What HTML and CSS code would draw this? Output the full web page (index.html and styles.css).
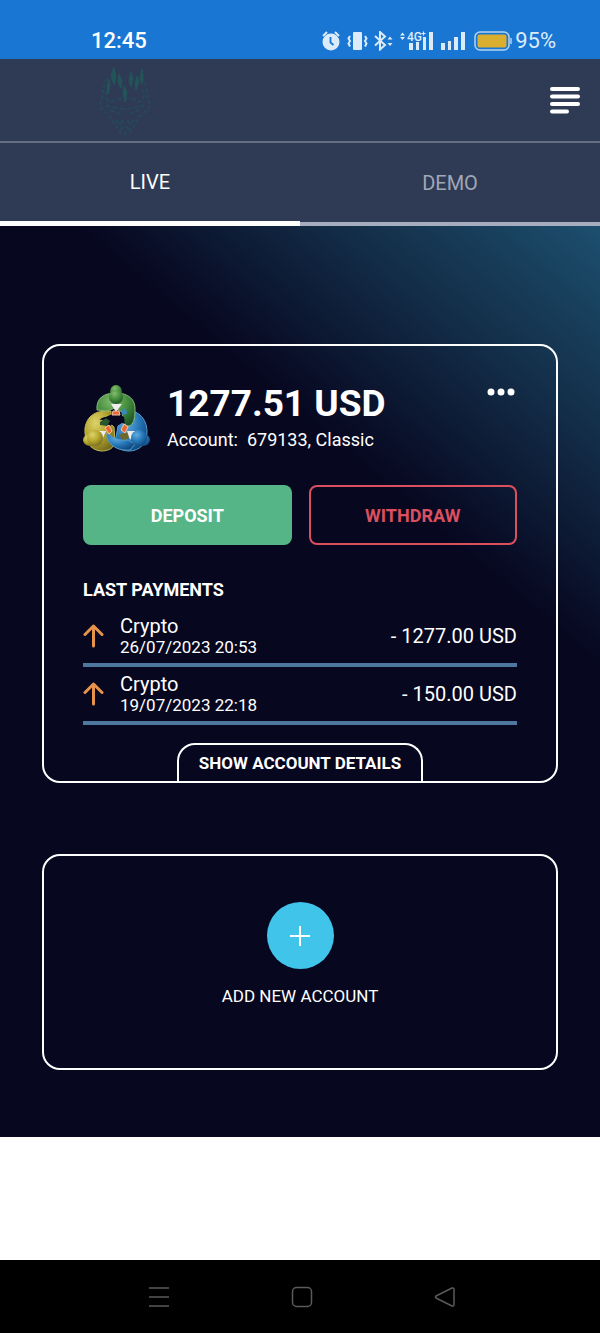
FILE: index.html
```html
<!doctype html>
<html lang="en">
<head>
    <meta charset="utf-8">
    <meta name="viewport" content="width=device-width, initial-scale=1">
    <title>Accounts</title>
    <link rel="stylesheet" href="styles.css">
</head>
<body>
    <div class="status-bar">
        <span class="clock">12:45</span>
        <div class="status-icons">
            <svg width="162" height="20" viewBox="0 0 162 20" fill="#dcebfa">
                <!-- alarm -->
                <circle cx="9" cy="11" r="8.5"/>
                <path d="M1 5l4-4M13 1l4 4" stroke="#dcebfa" stroke-width="2"/>
                <path d="M8.500 6v5.500l3 2.500" fill="none" stroke="#1976d2" stroke-width="1.800"/>
                <!-- vibrate -->
                <rect x="31" y="1" width="9" height="18" rx="1"/>
                <path d="M28 5l-1.500 2.500 1.500 2.500-1.500 2.500 1.500 3M43 5l1.500 2.500-1.500 2.500 1.500 2.500-1.500 3" fill="none" stroke="#dcebfa" stroke-width="2"/>
                <!-- bluetooth -->
                <path d="M53 5l10 9-5 4.500V1l5 4.500-10 9" fill="none" stroke="#dcebfa" stroke-width="2"/>
                <path d="M65.500 8.500l2.500-3 2.500 3zM65.500 12l2.500 3 2.500-3z"/>
                <!-- mobile signal -->
                <path d="M78 4.500l2.500-3 2.500 3zM78 6l2.500 3 2.500-3z"/>
                <text x="85" y="10" font-family="Roboto, sans-serif" font-size="12" font-weight="500">4G</text>
                <path d="M99.500 2.500h4M101.500 .5v4" stroke="#dcebfa" stroke-width="1.200"/>
                <path d="M87 12h4v7h-4zM94 11h3v8h-3zM101 6h3v13h-3zM107 1h4v18h-4z"/>
                <path d="M119 12h4v7h-4zM126 10h3v9h-3zM132 6h4v13h-4zM139 1h4v18h-4z"/>
            </svg>
            <svg width="38" height="20" viewBox="0 0 38 20" fill="none">
                <rect x="1" y="1" width="34" height="18" rx="5" stroke="#b5d3f0" stroke-width="1.500"/>
                <rect x="3.500" y="3.500" width="29" height="13" rx="2" fill="#dcae2f"/>
                <path d="M37 7v6" stroke="#b5d3f0" stroke-width="1.500"/>
            </svg>
            <span class="battery">95%</span>
        </div>
    </div>

    <header class="header">
        <a class="logo" href="#" aria-label="Home">
            <svg width="54" height="72" viewBox="0 0 54 72" fill="none" stroke="#26495a" stroke-width="2">
                <path d="M9 14C4 24 5 31 4 36l-2 4c1 6 5 8 9 11l6 9 5 8 5 2 5-2 5-8 6-9c4-3 8-5 9-11l-2-4c-1-5 0-12-5-22" stroke-dasharray="4 2"/>
                <path d="M9 26c-2 6-1 9 3 12 9-5 21-5 30 0 4-3 5-6 3-12M8 41c10 5 28 5 38 0M12 46l10 4M42 46l-10 4M18 56l5 6M36 56l-5 6M22 66l5-4 5 4M25 56l-3 5M29 56l3 5" stroke-dasharray="5 2"/>
                <g stroke="#23545a" fill="#23545a" stroke-width="1">
                    <path d="M16 3l-3 9 3 9 2-8zM21 10l-1 8 3 6 1-7zM26 22l-1 6 2 10 2-10zM33 8l-2 8 2 7 2-8zM39 12l-2 8 1 6 3-8zM44 5l-2 9 2 6 1-8zM11 15l-2 8 1 7 2-8z"/>
                </g>
            </svg>
        </a>
        <button class="menu-btn" type="button" aria-label="Menu">
            <svg width="30" height="28" viewBox="0 0 30 28" stroke="#fff" stroke-width="4" stroke-linecap="round">
                <path d="M2 3h26M2 10.500h26M2 18h26M2 25.500h15"/>
            </svg>
        </button>
    </header>

    <nav class="tabs">
        <a class="tab active" href="#live">LIVE</a>
        <a class="tab" href="#demo">DEMO</a>
    </nav>

    <main class="content">
        <section class="card account">
            <div class="account-head">
                <!-- three people round a table -->
                <svg class="account-logo" width="67" height="68" viewBox="0 0 67 68">
                    <defs>
                        <radialGradient id="green" cx=".4" cy=".25" r=".8">
                            <stop offset="0" stop-color="#86bb70"/>
                            <stop offset=".5" stop-color="#458f3d"/>
                            <stop offset="1" stop-color="#1c5427"/>
                        </radialGradient>
                        <radialGradient id="yellow" cx=".35" cy=".3" r=".8">
                            <stop offset="0" stop-color="#ddd36c"/>
                            <stop offset=".5" stop-color="#b6a62d"/>
                            <stop offset="1" stop-color="#6e651c"/>
                        </radialGradient>
                        <radialGradient id="blue" cx=".35" cy=".3" r=".8">
                            <stop offset="0" stop-color="#62ade0"/>
                            <stop offset=".5" stop-color="#2777b8"/>
                            <stop offset="1" stop-color="#0c4177"/>
                        </radialGradient>
                    </defs>
                    <!-- blue body -->
                    <path d="M50 26c9 3 14 11 14 21 0 11-7 19-18 19-7 0-12-3-14-8l3-17 8-5 9 2z" fill="url(#blue)" stroke="#559ccb"/>
                    <!-- yellow body and arm -->
                    <path d="M28 26C12 25 4 31 2 43c-1 13 5 22 16 23 8 0 13-3 14-9l-1-15-7-6-8-1c2-3 6-4 12-4z" fill="url(#yellow)" stroke="#c3b957"/>
                    <!-- green body and arm -->
                    <path d="M14 25C13 13 21 8 33 8s20 6 19 18c0 8-2 14-6 15-4 0-5-3-6-8l-1-6-7-4-8 3z" fill="url(#green)" stroke="#8bb779"/>
                    <path d="M23 32l10-5 8 5 1 7-8-4-7 6-9-2z" fill="#070720"/>
                    <path d="M17 37l6-4 4 3-3 5-7-1z" fill="#28572c"/>
                    <path d="M36 50l7-3 4 4-6 6z" fill="#6e6829"/>
                    <!-- blue arm -->
                    <path d="M24 48c7 6 13 8 21 7l7 4-5 6c-11 1-19-3-23-12z" fill="url(#blue)" stroke="#559ccb"/>
                    <path d="M28 19l5 8 6-8zM14 46h9l-4 9zM53 46h-9l3 9z" fill="#eee"/>
                    <path d="M30 26h6l1 4h-8zM22 43l4-3 3 6-3 3zM41 39l4 3-3 6-4-3z" fill="#e76932" stroke="#f7c4aa"/>
                    <path d="M39 25l4-2 1 6-5 1z" fill="#3787bd"/>
                    <!-- heads -->
                    <ellipse cx="33" cy="7" rx="6" ry="7" fill="url(#green)"/>
                    <circle cx="33" cy="12" r="7" fill="url(#green)"/>
                    <ellipse cx="7" cy="55" rx="7" ry="6" fill="url(#yellow)"/>
                    <circle cx="12" cy="53" r="8" fill="url(#yellow)"/>
                    <ellipse cx="60" cy="55" rx="7" ry="6" fill="url(#blue)"/>
                    <circle cx="56" cy="53" r="8" fill="url(#blue)"/>
                </svg>
                <div class="account-info">
                    <h1 class="balance">1277.51 USD</h1>
                    <p class="account-number">Account:&nbsp; 679133, Classic</p>
                </div>
                <button class="more-btn" type="button" aria-label="More">
                    <svg width="28" height="8" viewBox="0 0 28 8" fill="#fff">
                        <circle cx="4" cy="4" r="3.500"/>
                        <circle cx="14" cy="4" r="3.500"/>
                        <circle cx="24" cy="4" r="3.500"/>
                    </svg>
                </button>
            </div>

            <div class="actions">
                <button class="btn deposit" type="button">DEPOSIT</button>
                <button class="btn withdraw" type="button">WITHDRAW</button>
            </div>

            <h2 class="payments-title">LAST PAYMENTS</h2>
            <ul class="payments">
                <li class="payment">
                    <svg width="21" height="24" viewBox="0 0 21 24" fill="none" stroke="#e6944c" stroke-width="3" stroke-linecap="round" stroke-linejoin="round">
                        <path d="M10.500 22V2M2 10.500L10.500 2l8.500 8.500"/>
                    </svg>
                    <div class="payment-info">
                        <span class="method">Crypto</span>
                        <time class="date">26/07/2023 20:53</time>
                    </div>
                    <span class="amount">- 1277.00 USD</span>
                </li>
                <li class="payment">
                    <svg width="21" height="24" viewBox="0 0 21 24" fill="none" stroke="#e6944c" stroke-width="3" stroke-linecap="round" stroke-linejoin="round">
                        <path d="M10.500 22V2M2 10.500L10.500 2l8.500 8.500"/>
                    </svg>
                    <div class="payment-info">
                        <span class="method">Crypto</span>
                        <time class="date">19/07/2023 22:18</time>
                    </div>
                    <span class="amount">- 150.00 USD</span>
                </li>
            </ul>
            <button class="details-btn" type="button">SHOW ACCOUNT DETAILS</button>
        </section>

        <section class="card new-account">
            <button class="add-btn" type="button">
                <span class="add-icon">
                    <svg width="20" height="20" viewBox="0 0 20 20" stroke="#fff" stroke-width="2">
                        <path d="M10 0v20M0 10h20"/>
                    </svg>
                </span>
                ADD NEW ACCOUNT
            </button>
        </section>
    </main>

    <footer class="nav-bar">
        <button type="button" aria-label="Recent apps">
            <svg width="22" height="22" viewBox="0 0 22 22" stroke="#5a5a5a" stroke-width="1.500">
                <path d="M1 2h20M1 11h20M1 20h20"/>
            </svg>
        </button>
        <button type="button" aria-label="Home screen">
            <svg width="22" height="22" viewBox="0 0 22 22" fill="none" stroke="#5a5a5a" stroke-width="1.500">
                <rect x="1.500" y="1.500" width="19" height="19" rx="4"/>
            </svg>
        </button>
        <button type="button" aria-label="Back">
            <svg width="22" height="22" viewBox="0 0 22 22" fill="none" stroke="#5a5a5a" stroke-width="1.500" stroke-linejoin="round">
                <path d="M2 10L18 2q2-.5 2 1.500v15q0 2-2 1.500L2 12q-1-1 0-2z"/>
            </svg>
        </button>
    </footer>
</body>
</html>
```
FILE: styles.css
```css
* {
    box-sizing: border-box;
}

body {
    display: flex;
    flex-direction: column;
    min-height: 100vh;
    margin: 0;
    background: #fff;
    color: #fff;
    font-family: Roboto, sans-serif;
    font-size: 20px;
}

button {
    padding: 0;
    border: none;
    background: none;
    color: inherit;
    font: inherit;
    cursor: pointer;
}

a {
    color: inherit;
    text-decoration: none;
}

svg {
    display: block;
    flex: none;
}

h1, h2, p, ul {
    margin: 0;
    padding: 0;
}

/* phone status bar */
.status-bar {
    display: flex;
    justify-content: space-between;
    align-items: center;
    height: 59px;
    padding: 22px 44px 0 91px;
    background: #1976d2;
    font-size: 22px;
}

.clock {
    font-weight: 500;
}

.status-icons {
    display: flex;
    align-items: center;
    color: #dcebfa;
}

.status-icons svg + svg {
    margin-left: -10px;
}

.battery {
    margin-left: 3px;
}

.header {
    display: flex;
    justify-content: space-between;
    align-items: center;
    height: 84px;
    padding: 0 20px 0 98px;
    background: #2f3a55;
    border-bottom: 2px solid #656d82;
}

/* tabs */
.tabs {
    display: flex;
    height: 83px;
    background: #2f3a55;
}

.tab {
    display: flex;
    flex: 1;
    align-items: center;
    justify-content: center;
    border-bottom: 4px solid #a5adbf;
    color: #a0a7b7;
}

.tab.active {
    border-bottom: 5px solid #fff;
    color: #fff;
}

/* account cards */
.content {
    display: flex;
    flex-direction: column;
    gap: 71px;
    padding: 118px 42px 67px;
    background: linear-gradient(220deg, #1c4f6e 0%, #14304b 14%, #070720 31%);
}

.card {
    border: 2px solid #fff;
    border-radius: 18px;
}

.account {
    display: flex;
    flex-direction: column;
    padding: 39px 39px 0;
}

.account-head {
    display: flex;
    align-items: flex-start;
    gap: 17px;
}

.account-info {
    flex: 1;
}

.balance {
    font-size: 37px;
    line-height: 38px;
}

.account-number {
    font-size: 18px;
    line-height: 30px;
    margin-top: 2px;
}

.more-btn {
    padding: 3px 2px;
}

.actions {
    display: grid;
    grid-template-columns: 1fr 1fr;
    gap: 17px;
    margin-top: 30px;
}

.btn {
    height: 60px;
    border-radius: 8px;
    font-size: 18px;
    font-weight: 700;
}

.deposit {
    background: #56b586;
}

.withdraw {
    border: 2px solid #db4f5f;
    color: #db4f5f;
}

.payments-title {
    margin: 34px 0 8px;
    font-size: 18px;
    line-height: 22px;
}

.payments {
    list-style: none;
}

.payment {
    display: flex;
    align-items: center;
    gap: 16px;
    padding: 6px 0;
    border-bottom: 4px solid #4d779f;
}

.payment-info {
    display: flex;
    flex: 1;
    flex-direction: column;
}

.method {
    line-height: 22px;
}

.date {
    font-size: 17px;
    line-height: 20px;
}

.details-btn {
    align-self: center;
    height: 38px;
    margin-top: 18px;
    padding: 0 20px;
    border: 2px solid #fff;
    border-bottom: none;
    border-radius: 18px 18px 0 0;
    font-size: 17px;
    font-weight: 700;
}

.new-account {
    display: flex;
    justify-content: center;
    padding: 46px 20px 62px;
}

.add-btn {
    display: flex;
    flex-direction: column;
    align-items: center;
    gap: 17px;
    font-size: 17px;
    line-height: 20px;
}

.add-icon {
    display: flex;
    align-items: center;
    justify-content: center;
    width: 67px;
    height: 67px;
    border-radius: 50%;
    background: #41c4ea;
}

/* phone navigation bar */
.nav-bar {
    display: flex;
    justify-content: space-around;
    align-items: center;
    height: 73px;
    margin-top: auto;
    padding: 0 84px 0 87px;
    background: #000;
}
```
